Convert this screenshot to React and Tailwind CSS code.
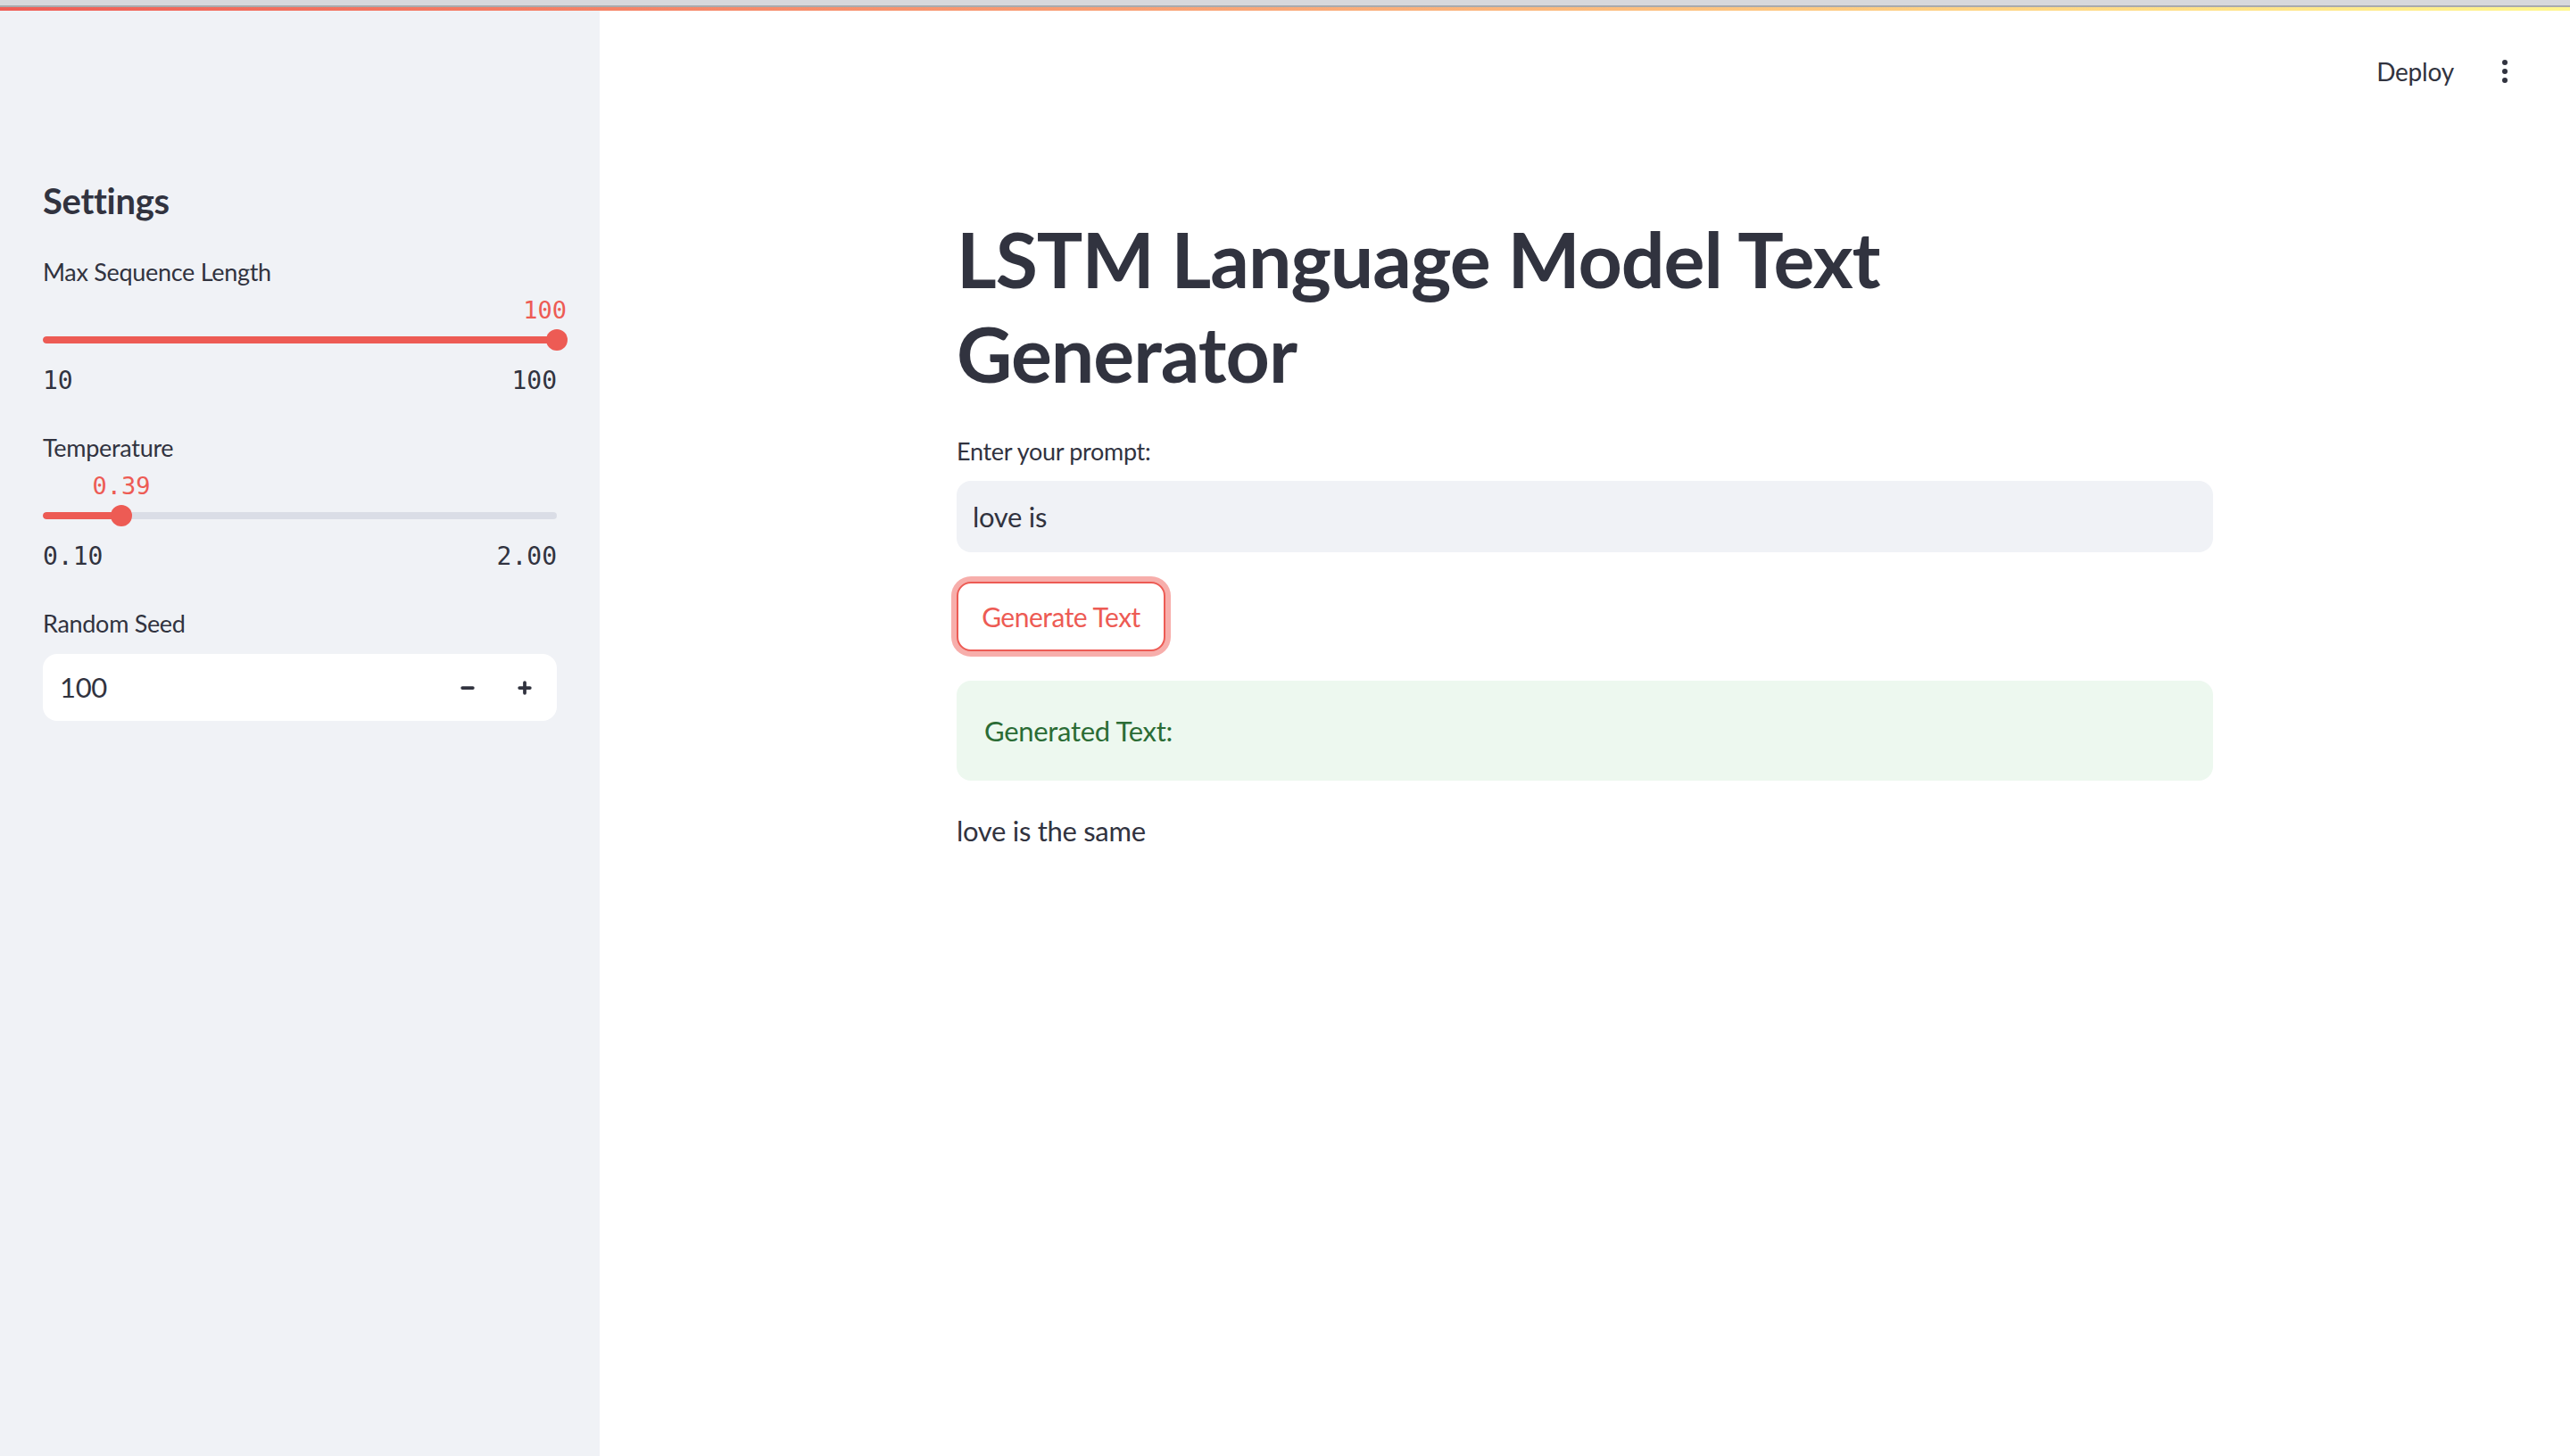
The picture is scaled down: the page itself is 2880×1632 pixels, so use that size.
import { Minus, Plus } from 'lucide-react';

const sans = "font-['Lato','Noto_Sans',sans-serif]";
const mono = "font-['DejaVu_Sans_Mono','Liberation_Mono',monospace]";

function Slider({ min, max, pct, value, valueAt }) {
  return (
    <div className="h-[161px] flex flex-col">
      <div className="relative h-[46px]">
        <span className={`absolute top-[9px] text-[27px] leading-[32px] text-[#ed5b54] ${mono} ${valueAt}`} style={valueAt ? undefined : { left: `${pct * 100}%`, transform: 'translateX(-50%)' }}>
          {value}
        </span>
      </div>
      <div className="relative h-[24px] flex items-center">
        <div className="w-full h-[8px] rounded-full bg-[#dadde6] overflow-hidden">
          <div className="h-full bg-[#ed5b54] rounded-full" style={{ width: `${pct * 100}%` }}></div>
        </div>
        <div className="absolute top-0 w-[24px] h-[24px] rounded-full bg-[#ed5b54] -translate-x-1/2" style={{ left: `${pct * 100}%` }}></div>
      </div>
      <div className={`mt-[18px] flex justify-between text-[28px] leading-[32px] text-[#31333f] ${mono}`}>
        <span>{min}</span>
        <span>{max}</span>
      </div>
    </div>
  );
}

function Label({ children }) {
  return <div className="text-[27px] leading-[36px] tracking-[-0.3px] text-[#31333f]">{children}</div>;
}

export default function App() {
  return (
    <div className={`h-screen flex flex-col bg-white ${sans}`}>
      {/* browser edge + streamlit decoration */}
      <div className="h-[6px] bg-[#d7d8dc]"></div>
      <div className="h-[2px] bg-[#a9aaad]"></div>
      <div className="h-[4px] bg-gradient-to-r from-[#ef5d56] via-[#f9a878] to-[#fff78f]"></div>

      <div className="flex-1 flex min-h-0">
        {/* sidebar */}
        <aside className="w-[672px] shrink-0 bg-[#f0f2f6] px-[48px] pt-[189px] flex flex-col">
          <h2 className="text-[40px] leading-[48px] font-bold tracking-[-0.3px] text-[#31333f]">Settings</h2>

          <div className="mt-[38px]">
            <Label>Max Sequence Length</Label>
            <Slider min="10" max="100" pct={1} value="100" valueAt="right-[-11px]" />
          </div>

          <div>
            <Label>Temperature</Label>
            <Slider min="0.10" max="2.00" pct={(0.39 - 0.1) / 1.9} value="0.39" />
          </div>

          <div>
            <Label>Random Seed</Label>
            <div className="mt-[16px] h-[75px] rounded-[16px] bg-white flex items-center pl-[19px] pr-[26px]">
              <span className="flex-1 text-[31px] tracking-[-0.3px] text-[#31333f]">100</span>
              <Minus className="w-[20px] h-[20px] text-[#31333f]" strokeWidth={4.5} />
              <Plus className="ml-[44px] w-[20px] h-[20px] text-[#31333f]" strokeWidth={4.5} />
            </div>
          </div>
        </aside>

        {/* main */}
        <main className="flex-1 flex flex-col">
          <header className="mt-[50px] h-[36px] flex items-center justify-end pr-[70px] gap-[54px]">
            <span className="text-[28px] leading-[36px] tracking-[-0.2px] text-[#31333f]">Deploy</span>
            <div className="flex flex-col gap-[4px]">
              <span className="w-[6px] h-[6px] rounded-full bg-[#31333f]"></span>
              <span className="w-[6px] h-[6px] rounded-full bg-[#31333f]"></span>
              <span className="w-[6px] h-[6px] rounded-full bg-[#31333f]"></span>
            </div>
          </header>

          <div className="w-[1408px] mx-auto flex flex-col">
            <h1 className="mt-[139px] text-[86px] leading-[106px] font-bold tracking-[-1px] text-[#31333f]">
              LSTM Language Model Text
              <br />
              Generator
            </h1>

            <div className="mt-[39px]">
              <Label>Enter your prompt:</Label>
            </div>
            <div className="mt-[15px] h-[80px] rounded-[16px] bg-[#f0f2f6] flex items-center px-[18px] text-[31px] leading-[48px] tracking-[-0.3px] text-[#31333f]">
              love is
            </div>

            <div className="mt-[33px]">
              <button className="w-[234px] h-[78px] rounded-[16px] border-2 border-[#ed5b54] bg-white text-[30px] leading-[48px] tracking-[-0.5px] text-[#ed5b54] ring-[6px] ring-[#f7aeab]">
                Generate Text
              </button>
            </div>

            <div className="mt-[33px] rounded-[16px] bg-[#edf8ef] px-[31px] py-[32px] text-[31px] leading-[48px] tracking-[-0.3px] text-[#2b6c35]">
              Generated Text:
            </div>

            <p className="mt-[32px] text-[31px] leading-[48px] tracking-[-0.3px] text-[#31333f]">love is the same</p>
          </div>
        </main>
      </div>
    </div>
  );
}
